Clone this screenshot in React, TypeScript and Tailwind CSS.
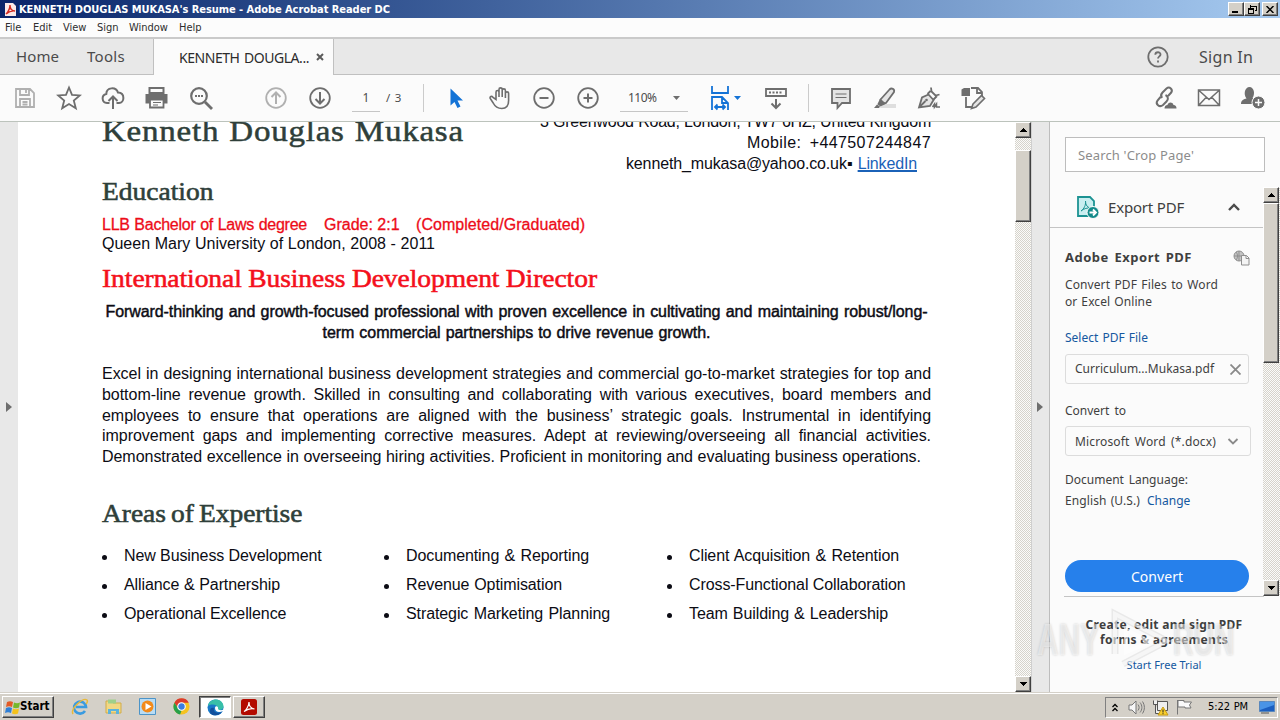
import type { ReactNode } from 'react';

const UI = "font-['Noto_Sans','Open_Sans',sans-serif]";
const TAHOMA = "font-['DejaVu_Sans_Condensed','DejaVu_Sans',sans-serif]";
const BEVEL = 'border border-t-white border-l-white border-r-[#404040] border-b-[#404040] bg-[#d4d0c8] shadow-[inset_-1px_-1px_0_#808080]';
const DITHER = 'bg-[conic-gradient(#d6d3cb_25%,#fbfbfa_0_50%,#d6d3cb_0_75%,#fbfbfa_0)] bg-[size:2px_2px]';

const menus = [
  { label: 'File', w: 'w-[28px]' },
  { label: 'Edit', w: 'w-[30px]' },
  { label: 'View', w: 'w-[34px]' },
  { label: 'Sign', w: 'w-[32px]' },
  { label: 'Window', w: 'w-[50px]' },
  { label: 'Help', w: 'w-[30px]' },
];

const summary = [
  'Excel in designing international business development strategies and commercial go-to-market strategies for top and',
  'bottom-line revenue growth. Skilled in consulting and collaborating with various executives, board members and',
  'employees to ensure that operations are aligned with the business’ strategic goals. Instrumental in identifying',
  'improvement gaps and implementing corrective measures. Adept at reviewing/overseeing all financial activities.',
];

const expertise = [
  { col: 'w-[282px]', items: [['New Business Development', 'w-[197px]'], ['Alliance & Partnership', 'w-[156px]'], ['Operational Excellence', 'w-[161px]']] },
  { col: 'w-[283px]', items: [['Documenting & Reporting', 'w-[183px]'], ['Revenue Optimisation', 'w-[156px]'], ['Strategic Marketing Planning', 'w-[204px]']] },
  { col: 'w-[262px]', items: [['Client Acquisition & Retention', 'w-[210px]'], ['Cross-Functional Collaboration', 'w-[216px]'], ['Team Building & Leadership', 'w-[199px]']] },
];

function Spread({ w, className = '', children }: { w: string; className?: string; children: ReactNode }) {
  return <div className={`${w} ${className} whitespace-nowrap [text-align-last:justify]`}>{children}</div>;
}

function Icon({ children, stroke = '#6e6e6e', w = 'w-11' }: { children: ReactNode; stroke?: string; w?: string }) {
  return (
    <div className={`flex h-7 ${w} shrink-0 items-center justify-center`}>
      <svg width="26" height="26" viewBox="0 0 26 26" fill="none" stroke={stroke} strokeWidth="1.8">
        {children}
      </svg>
    </div>
  );
}

function ScrollButton({ down = false }: { down?: boolean }) {
  return (
    <div className={`flex h-4 w-4 shrink-0 items-center justify-center ${BEVEL}`}>
      <svg width="7" height="4" viewBox="0 0 7 4" shapeRendering="crispEdges">
        <path d={down ? 'M0 0h7L3.5 4z' : 'M0 4h7L3.5 0z'} fill="#000" />
      </svg>
    </div>
  );
}

function TitleBar() {
  return (
    <div className="flex h-[18px] items-center bg-linear-to-r from-[#0a246a] to-[#a6caf0] pr-[2px] pl-1">
      <svg width="12" height="14" viewBox="0 0 12 14">
        <path d="M1 1h8l3 3v10H1z" fill="#fbe9e8" />
        <path d="M2 12c2-2 4-6 4-9 0 4 2 6 5 6-3-.6-6 .6-9 3z" fill="none" stroke="#d42a20" strokeWidth="1.4" />
      </svg>
      <Spread w="w-[370px]" className={`mt-px ml-[3px] text-[11px] leading-[17px] font-bold text-white ${TAHOMA} tracking-[-0.05px]`}>
        KENNETH DOUGLAS MUKASA's Resume - Adobe Acrobat Reader DC
      </Spread>
      <div className="ml-auto flex">
        <div className={`h-[14px] w-4 ${BEVEL}`}>
          <div className="mt-2 ml-[3px] h-[2px] w-[6px] bg-black" />
        </div>
        <div className={`flex h-[14px] w-4 items-center justify-center ${BEVEL}`}>
          <svg width="9" height="9" viewBox="0 0 9 9" fill="none" stroke="#000" shapeRendering="crispEdges">
            <path d="M3 1h5v4M8.5 1v4.5H6.500M2.500 0v3.500M.5 3.500h5v5h-5zM0 4.500h6" />
          </svg>
        </div>
        <div className={`ml-[2px] flex h-[14px] w-4 items-center justify-center ${BEVEL}`}>
          <svg width="8" height="7" viewBox="0 0 8 7" stroke="#000" strokeWidth="1.5">
            <path d="M.5 0l7 7M7.500 0l-7 7" />
          </svg>
        </div>
      </div>
    </div>
  );
}

function TabBar() {
  return (
    <div className={`flex h-[38px] items-stretch border-t-2 border-[#cacaca] bg-[#e8e8e8] text-[15px] text-[#4b4b4b] ${UI}`}>
      <div className="flex w-[154px] items-center border-r border-b border-[#c0c0c0] pl-4">
        <span className="w-[71px] tracking-[0.1px]">Home</span>
        <span className="tracking-[0.3px]">Tools</span>
      </div>
      <div className="flex w-[179px] items-center bg-[#fbfbfb] pl-[25px] text-[#2c2c2c]">
        <Spread w="w-[130px]" className="text-[14px] tracking-[-0.45px]">KENNETH DOUGLA...</Spread>
        <svg className="ml-[7px]" width="8" height="8" viewBox="0 0 8 8" stroke="#5b5b5b" strokeWidth="2">
          <path d="M1 1l6 6M7 1L1 7" />
        </svg>
      </div>
      <div className="flex flex-1 items-center border-b border-l border-[#c0c0c0]">
        <svg className="ml-auto" width="22" height="22" viewBox="0 0 22 22" fill="none" stroke="#6e6e6e" strokeWidth="1.8">
          <circle cx="11" cy="11" r="9.700" />
          <path d="M8.300 8.800c0-3.500 5.400-3.300 5.200-.2-.1 1.700-2.500 1.900-2.500 4M11 14.500v2" />
        </svg>
        <span className="mr-[26px] ml-[30px] w-[55px] text-[16px] tracking-[0.3px] whitespace-nowrap">Sign In</span>
      </div>
    </div>
  );
}

function Toolbar() {
  return (
    <div className={`flex h-[47px] items-center border-b border-[#bcc3bc] bg-[#fbfbfb] pl-[3px] text-xs text-[#4b4b4b] ${UI}`}>
      <Icon stroke="#b0b0b0">
        <path d="M4 4h14l4 4v14H4zM8 4v6h9V4M8 22v-8h10v8M14 5v3M10.500 17h5M10.500 19.500h5" />
      </Icon>
      <Icon>
        <path d="M13 2.500l3 7.300 7.800.6-6 5.100 2 7.800-6.800-4.300-6.800 4.300 2-7.800-6-5.100 7.800-.6z" />
      </Icon>
      <Icon>
        <path d="M9.500 18H7a4.600 4.600 0 0 1-.7-9.100C6.500 2 16 1.500 18 7.600 25.500 8 24.500 18 19 18h-2.500M13 24V12M8.500 16l4.500-4.500 4.500 4.500" strokeWidth="2" />
      </Icon>
      <Icon>
        <path d="M5.500 3h14v5h-14z" strokeWidth="2" />
        <path d="M1.500 9h22v9.500h-22z" fill="#6e6e6e" stroke="none" />
        <path d="M6 14.500h13.500v8H6z" fill="#fbfbfb" />
        <path d="M9 17.500h8M9 20h5" strokeWidth="1.200" />
      </Icon>
      <Icon>
        <circle cx="11" cy="11" r="7.800" strokeWidth="2.200" />
        <path d="M17 17l7 7" strokeWidth="2.800" />
        <path d="M7 11h2M10 11h2M13 11h2" strokeWidth="2" />
      </Icon>
      <div className="w-[31px]" />
      <Icon stroke="#b0b0b0">
        <circle cx="13" cy="13" r="9.800" />
        <path d="M13 19V7.500M8.500 12L13 7.500l4.500 4.500" strokeWidth="2" />
      </Icon>
      <Icon>
        <circle cx="13" cy="13" r="9.800" />
        <path d="M13 7v11.500M8.500 14l4.500 4.500 4.500-4.500" strokeWidth="2" />
      </Icon>
      <div className="ml-[10px] h-[27px] w-7 border-b border-[#c6c6c6] text-center leading-[26px]">1</div>
      <span className="ml-[6px] w-[18px] pb-px text-[11.5px] tracking-[0.7px] whitespace-pre">/ 3</span>
      <div className="ml-[19px] h-7 w-px bg-[#cbcbcb]" />
      <div className="w-[10px]" />
      <Icon>
        <path d="M7.500 3.500v17l4-3.500 3 6 3-1.500-3-6h5.500z" fill="#1473d6" stroke="none" />
      </Icon>
      <Icon>
        <path d="M9 14.500V7.200c0-2.200 3-2.200 3 0V12V4.500c0-2.200 3.200-2.200 3.200 0V12V5.500c0-2.200 3.200-2.200 3.200 0V13V8.500c0-2.200 3.200-2.200 3.200 0V15.500c0 5.500-2.500 8-6.800 8s-6.800-2-8.600-5.500l-3-4.500c-.8-2 1.500-2.800 2.800-1.200z" strokeWidth="1.600" />
      </Icon>
      <Icon>
        <circle cx="13" cy="13" r="9.800" />
        <path d="M8.500 13h9" strokeWidth="2" />
      </Icon>
      <Icon>
        <circle cx="13" cy="13" r="9.800" />
        <path d="M8.500 13h9M13 8.500v9" strokeWidth="2" />
      </Icon>
      <div className="ml-[10px] flex h-[27px] w-[68px] items-center border-b border-[#c6c6c6] pl-2">
        <span className="w-[29px] text-[12px] tracking-[-0.5px]">110%</span>
        <svg className="ml-[16px]" width="7" height="4" viewBox="0 0 7 4"><path d="M0 0h7L3.500 4z" fill="#6e6e6e" /></svg>
      </div>
      <div className="ml-[10px] flex w-[56px] items-center">
        <svg className="ml-[13px]" width="18" height="26" viewBox="0 0 18 26" fill="none" stroke="#1473d6" strokeWidth="1.800">
          <path d="M1 1v7h16V1M1 25V12h10l6 6v7M11 12v6h6M4 22h10M6.500 19.500L4 22l2.500 2.500M11.500 19.500L14 22l-2.500 2.500" />
        </svg>
        <svg className="ml-[5px]" width="7" height="4" viewBox="0 0 7 4"><path d="M0 0h7L3.500 4z" fill="#1473d6" /></svg>
      </div>
      <Icon>
        <path d="M3 4h20v7H3z" />
        <path d="M6 7.500h14" strokeDasharray="2 1.500" strokeWidth="2" />
        <path d="M13 14v9M8.500 18.500L13 23l4.500-4.500" strokeWidth="2" />
      </Icon>
      <div className="ml-[10px] h-7 w-px bg-[#cbcbcb]" />
      <div className="w-[10px]" />
      <Icon>
        <path d="M4 4h18v14h-8l-4.500 5V18H4z" fill="#e4e4e4" />
        <path d="M7.500 9h11M7.500 12.500h11" strokeWidth="1.200" />
      </Icon>
      <Icon>
        <path d="M10 19h14v4H8z" fill="#dedede" stroke="none" />
        <path d="M8.500 14.500l9-10c2-2 5.500-.5 4.500 2.500L14 18l-5 1z" fill="#e4e4e4" />
        <path d="M8.500 15l-2 4 2 1.500 4-2z" fill="#6e6e6e" />
        <path d="M2 23l3-3.500 3 2-1 1.500z" fill="#6e6e6e" stroke="none" />
      </Icon>
      <Icon>
        <path d="M3 22.500L6 12.500l6.500-3 5 5.500-3.500 6zM3 22.500l6.500-6.500" fill="#e4e4e4" />
        <path d="M11.500 9l3-3M17.500 14.500l3.500-3.500M15 2.500l.5 4 4 4 4-1" />
        <circle cx="10.500" cy="15" r="1.300" fill="#6e6e6e" stroke="none" />
        <path d="M16.500 22l2-3v3l2-3v3h3.500" strokeWidth="1.500" />
      </Icon>
      <Icon>
        <path d="M11 3h7l4 4v4M17 3v5h5M6 12v10h8" />
        <path d="M1.500 4.500L4 3h6v8H1.500z" fill="#6e6e6e" stroke="none" />
        <path d="M13 19l8.500-8.500 3 3L16 22l-4.500 1.500z" fill="#e4e4e4" strokeWidth="1.600" />
      </Icon>
      <div className="ml-auto flex pr-[5px]">
        <Icon>
          <path d="M9 13c-1.500-2-1-4 .5-5.500l4-4c3-2.500 7 .8 4.500 4.300l-3 3.200M12.500 10c3 1.500 3 4.500 1 6.500L10 20c-3.500 2.800-8-.8-5.500-4.500l3-3.500" strokeWidth="2" transform="translate(1 0)" />
          <path d="M12.500 23.500c0-2.500 1.500-3.500 3-3.500.5-3 5-3.500 6 0 2 0 3 1.200 3 3.500z" fill="#6e6e6e" stroke="none" />
        </Icon>
        <Icon>
          <path d="M2.500 5h21v15.500h-21zM3 5.500l10 9 10-9M3 20l7.500-8M23 20l-7.500-8" strokeWidth="1.500" />
        </Icon>
        <Icon>
          <path d="M1 19c0-4 3-5 5.500-5.500C3 9 5 2 9.500 2s6 7 3 11l1.500.7V19z" fill="#6e6e6e" stroke="none" />
          <circle cx="18.500" cy="17.500" r="6.500" fill="#6e6e6e" stroke="#fbfbfb" strokeWidth="1" />
          <path d="M15 17.500h7M18.500 14v7" stroke="#fbfbfb" strokeWidth="1.500" />
        </Icon>
      </div>
    </div>
  );
}

function Resume() {
  const heading = "origin-left scale-x-[1.1] font-['Liberation_Serif',serif] text-[25px] leading-[30px] [-webkit-text-stroke:0.55px]";

  return (
    <div className="w-[997px] overflow-hidden bg-white pl-[84px] font-['Liberation_Sans',sans-serif] text-[16px] text-[#0c0c14]">
      <div className="-mt-[11px] flex w-[829px] justify-between">
        <div className="w-[329px] origin-left scale-x-[1.1] font-['Liberation_Serif',serif] text-[30px] leading-[40px] tracking-[0.7px] whitespace-nowrap text-[#2f3f3a] [-webkit-text-stroke:0.5px] [text-align-last:justify]">
          Kenneth Douglas Mukasa
        </div>
        <div className="flex flex-col items-end leading-[21px]">
          <Spread w="w-[391px]" className="tracking-[-0.22px]">3 Greenwood Road, London, TW7 6HZ, United Kingdom</Spread>
          <Spread w="w-[184px]" className="tracking-[0.4px]">Mobile: +447507244847</Spread>
          <Spread w="w-[291px]" className="mr-[14px] tracking-[-0.14px]">
            kenneth_mukasa@yahoo.co.uk▪ <span className="text-[#1b62b8] underline decoration-2">LinkedIn</span>
          </Spread>
        </div>
      </div>

      <h2 className={`mt-[3px] w-[101px] whitespace-nowrap text-[#2f3f3a] ${heading}`}>Education</h2>
      <div className="mt-[8px] leading-[19px]">
        <div className="flex text-[#ed0c18] [-webkit-text-stroke:0.3px]">
          <Spread w="w-[205px]" className="tracking-[-0.25px]">LLB Bachelor of Laws degree</Spread>
          <Spread w="w-[75px]" className="ml-[17px]">Grade: 2:1</Spread>
          <span className="ml-[17px] tracking-[0.05px]">(Completed/Graduated)</span>
        </div>
        <Spread w="w-[333px]">Queen Mary University of London, 2008 - 2011</Spread>
      </div>

      <h2 className={`mt-[11px] w-[450px] tracking-[-0.05px] whitespace-nowrap text-[#f4101c] [text-align-last:justify] [word-spacing:-1px] ${heading}`}>International Business Development Director</h2>
      <div className="mt-[7px] flex w-[829px] flex-col items-center leading-[21px] [-webkit-text-stroke:0.45px]">
        <Spread w="w-[822px]" className="tracking-[-0.08px]">Forward-thinking and growth-focused professional with proven excellence in cultivating and maintaining robust/long-</Spread>
        <Spread w="w-[388px]" className="tracking-[-0.05px]">term commercial partnerships to drive revenue growth.</Spread>
      </div>

      <div className="mt-[21px] leading-[20.75px] tracking-[-0.04px]">
        {summary.map(line => (
          <Spread key={line} w="w-[829px]">{line}</Spread>
        ))}
        <Spread w="w-[819px]">Demonstrated excellence in overseeing hiring activities. Proficient in monitoring and evaluating business operations.</Spread>
      </div>

      <h2 className={`mt-[31px] w-[182px] tracking-[-0.05px] whitespace-nowrap text-[#2f3f3a] [text-align-last:justify] [word-spacing:-1.5px] ${heading}`}>Areas of Expertise</h2>
      <div className="mt-[12px] flex leading-[29px]">
        {expertise.map(({ col, items }) => (
          <ul key={col} className={col}>
            {items.map(([text, w]) => (
              <li key={text} className="flex items-center">
                <span className="mt-[5px] mr-[17px] h-[5px] w-[5px] rounded-full bg-[#0c0c14]" />
                <Spread w={w} className="tracking-[-0.1px]">{text}</Spread>
              </li>
            ))}
          </ul>
        ))}
      </div>
    </div>
  );
}

function SidePanel() {
  return (
    <div className={`relative flex w-[231px] flex-col border-l border-[#bdbdbd] bg-[#fbfbfb] pl-[15px] text-[#3f3f3f] ${UI}`}>
      <div className="mt-[15px] flex h-[35px] w-[200px] items-center border border-[#bdbdbd] bg-white pl-3">
        <Spread w="w-[115px]" className="mt-[2px] text-[13px] tracking-[0.15px] text-[#8c8c8c]">Search 'Crop Page'</Spread>
      </div>

      <div className="mt-[15px] flex h-[409px]">
        <div className="-ml-[15px] w-[214px] pl-[15px]">
          <div className="-ml-[15px] flex h-[41px] items-center border-b border-[#c4c4c4] pl-[26px]">
            <svg width="24" height="24" viewBox="0 0 24 24" fill="none">
              <path d="M2 2h12l4 4v15H2z" fill="#c9eef0" stroke="#1c9292" strokeWidth="1.800" />
              <path d="M5 16c3-2 5-6 4.500-10 0 4 2 7 6 7-4-.5-7.500.5-10.500 3z" stroke="#1c9292" />
              <circle cx="17" cy="17.500" r="6" fill="#138a8a" stroke="#fbfbfb" />
              <path d="M13.500 17.500h6M17 14.500l3 3-3 3" stroke="#fff" strokeWidth="1.800" />
            </svg>
            <Spread w="w-[76px]" className="ml-[8px] text-[15px] tracking-[-0.2px]">Export PDF</Spread>
            <svg className="ml-[44px]" width="12" height="8" viewBox="0 0 12 8" fill="none" stroke="#4b4b4b" strokeWidth="2.400">
              <path d="M1 7l5-5 5 5" />
            </svg>
          </div>

          <div className="mt-[20px] flex h-5 items-center">
            <Spread w="w-[127px]" className="text-[13px] font-bold tracking-[0.5px]">Adobe Export PDF</Spread>
            <svg className="ml-[41px]" width="17" height="16" viewBox="0 0 17 16" fill="none" stroke="#8f8f8f">
              <circle cx="6" cy="6" r="5" fill="#c4c4c4" />
              <path d="M1 6h10M6 1v10M3 2c2 2 2 6 0 8" />
              <path d="M8.500 5.500h5l2.500 2.500v7H8.500zM13 5.500v3h3" fill="#f4f4f4" />
            </svg>
          </div>
          <div className="mt-2 text-[12px] leading-[17px]">
            <Spread w="w-[153px]" className="tracking-[0.1px]">Convert PDF Files to Word</Spread>
            <Spread w="w-[87px]" className="tracking-[0.1px]">or Excel Online</Spread>
            <Spread w="w-[83px]" className="mt-[19px] text-[#1558a0]">Select PDF File</Spread>
          </div>
          <div className="mt-[8px] flex h-[30px] w-[184px] items-center rounded-[3px] border border-[#dcdcdc] pl-[9px] text-[12px]">
            <span className="w-[140px] whitespace-nowrap tracking-[0.02px]">Curriculum...Mukasa.pdf</span>
            <svg className="ml-[15px]" width="11" height="11" viewBox="0 0 11 11" stroke="#8a8a8a" strokeWidth="1.800"><path d="M.5.5l10 10M10.500.5l-10 10" /></svg>
          </div>
          <Spread w="w-[61px]" className="mt-[18px] text-[12px] leading-[17px]">Convert to</Spread>
          <div className="mt-[7px] flex h-[30px] w-[186px] items-center rounded-[3px] border border-[#dcdcdc] pl-[9px] text-[12px]">
            <Spread w="w-[141px]" className="mt-[2px] tracking-[0.15px]">Microsoft Word (*.docx)</Spread>
            <svg className="ml-[11px]" width="12" height="7" viewBox="0 0 12 7" fill="none" stroke="#8a8a8a" strokeWidth="1.800"><path d="M1.500 1L6 5.500 10.500 1" /></svg>
          </div>
          <div className="mt-[13px] text-[12px] leading-[21px]">
            <Spread w="w-[123px]">Document Language:</Spread>
            <div className="flex">
              <Spread w="w-[75px]" className="tracking-[0.1px]">English (U.S.)</Spread>
              <span className="ml-[7px] text-[#1558a0]">Change</span>
            </div>
          </div>
          <div className="mt-[49px] flex h-[32px] w-[184px] items-center justify-center rounded-full bg-[#2680eb] text-[14px] tracking-[0.05px] text-white">Convert</div>
        </div>
        <div className={`flex w-[17px] shrink-0 flex-col ${DITHER}`}>
          <ScrollButton />
          <div className={`h-[160px] w-4 ${BEVEL}`} />
          <div className="flex-1" />
          <ScrollButton down />
        </div>
      </div>

      <div className="-ml-px w-[200px] border-t border-[#c4c4c4] pt-[20px] text-center text-[12px] leading-[15px]">
        <div className="text-[12px] font-bold tracking-[0.3px] whitespace-nowrap">Create, edit and sign PDF<br />forms &amp; agreements</div>
        <div className="mt-[9px] text-[11px] leading-[17px] text-[#1558a0]">Start Free Trial</div>
      </div>

      <div className="absolute top-[485px] -left-[13px] flex w-[200px] items-center font-['Liberation_Sans',sans-serif] text-[45px] leading-[66px] font-bold text-white/50 [text-shadow:0_0_3px_rgba(0,0,0,0.18)]">
        <span className="w-[72px] origin-left scale-x-[0.66]">ANY</span>
        <svg className="shrink-0" width="64" height="64" viewBox="0 0 64 64" fill="none" stroke="#fff" strokeOpacity="0.600" strokeWidth="4">
          <path d="M6 46V6l52 27L14 56" stroke="#000" strokeOpacity="0.070" strokeWidth="7" />
          <path d="M6 46V6l52 27L14 56M17 44V22l24 12z" />
        </svg>
        <span className="w-[64px] origin-left scale-x-[0.63]">RUN</span>
      </div>
    </div>
  );
}

function Taskbar() {
  return (
    <div className={`flex h-7 items-center border-t border-[#d4d0c8] bg-[#d4d0c8] pl-[2px] text-[11px] text-black shadow-[inset_0_1px_0_#fff] ${TAHOMA}`}>
      <div className={`mt-px flex h-[22px] w-[52px] items-center pl-[2px] ${BEVEL}`}>
        <svg width="16" height="15" viewBox="0 0 16 15">
          <path d="M2 2c2-1 4-1 6 0L7 7C5 6 3 6 1 7z" fill="#e35a25" />
          <path d="M9 2.500c2 1 4 1 6 0l-1 5c-2 1-4 1-6 0z" fill="#76b82a" />
          <path d="M1 8c2-1 4-1 6 0l-1 5c-2-1-4-1-6 0z" fill="#2f7fd6" />
          <path d="M8 8.500c2 1 4 1 6 0l-1 5c-2 1-4 1-6 0z" fill="#f5c21b" />
        </svg>
        <span className="-ml-px text-[11.5px] font-bold">Start</span>
      </div>
      <svg className="ml-[17px]" width="18" height="18" viewBox="0 0 18 18" fill="none">
        <path d="M14 13a6 6 0 1 1 1-4H5" stroke="#3a9be0" strokeWidth="2.600" />
        <path d="M2 16C-1 11 12-1 16 2c1 1 0 3-1 4" stroke="#e8b93a" strokeWidth="1.500" />
      </svg>
      <svg className="ml-[16px]" width="17" height="17" viewBox="0 0 17 17">
        <path d="M1 3h6l1 2h8v10H1z" fill="#f1d884" stroke="#d1ac4a" />
        <path d="M3 1.500h8v4H3z" fill="#9fd08b" />
        <path d="M3 16v-5h11v5h-3v-3H6v3z" fill="#5cb3dc" />
      </svg>
      <svg className="ml-[17px]" width="17" height="17" viewBox="0 0 17 17">
        <path d="M.5.5h16v16H.5z" fill="#b9dcf4" stroke="#4c94c8" />
        <circle cx="8.500" cy="8.500" r="6" fill="#f28a1a" />
        <path d="M6.500 5l6 3.500-6 3.500z" fill="#fff" />
      </svg>
      <svg className="ml-[17px]" width="17" height="17" viewBox="0 0 18 18">
        <circle cx="9" cy="9" r="8.500" fill="#f5c320" />
        <path d="M1.500 5a8.500 8.500 0 0 1 15.200 0H9L5.500 11z" fill="#dc3b2c" />
        <path d="M1.500 5L5.500 11l3.500 2.500-1.500 4A8.500 8.500 0 0 1 1.500 5z" fill="#27a04a" />
        <circle cx="9" cy="9" r="4" fill="#3a7de0" stroke="#fff" strokeWidth="1.200" />
      </svg>
      <div className="mt-px ml-[9px] flex h-[22px] w-[32px] items-center justify-center border border-t-[#404040] border-r-white border-b-white border-l-[#404040] bg-white shadow-[inset_1px_1px_0_#808080]">
        <svg width="17" height="17" viewBox="0 0 17 17">
          <circle cx="8.500" cy="8.500" r="8" fill="#1878c8" />
          <path d="M1 7C2-1 15-2 16.500 7c.5 4-5 5-6 3 1.500-4-5-6-9.500-3z" fill="#38bfa8" />
          <path d="M7 9c-1 4 3 6 8 4-3 4-12 5-12-1 0-3 2-4 4-3z" fill="#124f9c" />
          <path d="M8 9c0-3 4-2 3 1 1 1.500 4 1.500 5.500.5L16 12c-4 2-8 1-8-3z" fill="#fff" />
        </svg>
      </div>
      <div className={`mt-px ml-[2px] flex h-[22px] w-[32px] items-center justify-center ${BEVEL}`}>
        <svg width="16" height="16" viewBox="0 0 16 16">
          <rect width="16" height="16" rx="2.500" fill="#b30b00" />
          <path d="M3 12.500c2-1 5-6 5-9.500 0 4 2 6.500 5.500 7-4-1-7.500.5-10.500 2.500z" fill="none" stroke="#fff" strokeWidth="1.200" />
        </svg>
      </div>

      <div className="mt-px mr-[2px] ml-auto flex h-[21px] w-[173px] items-center border border-t-[#808080] border-r-white border-b-white border-l-[#808080] pl-[6px]">
        <svg width="6" height="9" viewBox="0 0 6 9" fill="none" stroke="#000" strokeWidth="1.300"><path d="M.5 4L3 1.500 5.500 4M.5 8L3 5.500 5.500 8" /></svg>
        <svg className="ml-[10px]" width="17" height="15" viewBox="0 0 17 15" fill="#f6f6f6" stroke="#777">
          <path d="M1 5h3l4-4v13l-4-4H1z" />
          <path d="M10 4.500c1.500 2 1.500 4 0 6M12 2.500c2.500 3 2.500 7 0 10M14.500 1.500c2.500 4 2.500 8 0 12" fill="none" />
        </svg>
        <svg className="ml-[7px]" width="17" height="17" viewBox="0 0 17 17" fill="#eee" stroke="#555">
          <path d="M5.500 2.500h10v9h-10zM1.500 1.500v4h4v-4M3.500 5.500v9h4" />
          <path d="M11 8l5 8H6z" fill="#f9cf2c" stroke="#c89b12" />
          <path d="M11 10.500v3M11 14.200v1" stroke="#222" />
        </svg>
        <svg className="ml-[7px]" width="17" height="16" viewBox="0 0 17 16" fill="#fafafa" stroke="#777">
          <path d="M1.500 1v14.500M2 1.500h6v1.500h7.500l-2 3 1.500 3H9V8H2z" />
        </svg>
        <Spread w="w-[40px]" className="ml-[15px] tracking-[-0.1px]">5:22 PM</Spread>
        <svg className="ml-[11px]" width="16" height="13" viewBox="0 0 16 13">
          <path d="M.5.5h15v10H.5z" fill="#1c5fc0" stroke="#5a88bd" />
          <path d="M1 1h14v3L1 9z" fill="#4a94e6" />
          <path d="M2 12h8" stroke="#555" />
        </svg>
      </div>
    </div>
  );
}

export default function App() {
  return (
    <div className="flex h-[720px] w-[1280px] flex-col overflow-hidden bg-[#fbfbfb]">
      <TitleBar />
      <div className={`flex h-[19px] items-center bg-[#fcfcfc] pt-[2px] pl-[5px] text-[11px] text-[#2e2e2e] ${TAHOMA}`}>
        {menus.map(({ label, w }) => (
          <span key={label} className={`${w} tracking-[-0.05px]`}>{label}</span>
        ))}
      </div>
      <TabBar />
      <Toolbar />
      <div className="flex h-[570px]">
        <div className="flex w-[18px] items-center bg-[#e8e8e8] pl-[6px]">
          <svg width="6" height="10" viewBox="0 0 6 10"><path d="M0 0l6 5-6 5z" fill="#6e6e6e" /></svg>
        </div>
        <Resume />
        <div className={`flex w-4 flex-col ${DITHER}`}>
          <ScrollButton />
          <div className={`mt-[12px] h-[72px] ${BEVEL}`} />
          <div className="flex-1" />
          <ScrollButton down />
        </div>
        <div className="flex w-[18px] items-center border-l border-[#cfcfcf] bg-[#e8e8e8] pl-[5px]">
          <svg width="6" height="10" viewBox="0 0 6 10"><path d="M0 0l6 5-6 5z" fill="#6e6e6e" /></svg>
        </div>
        <SidePanel />
      </div>
      <Taskbar />
    </div>
  );
}
